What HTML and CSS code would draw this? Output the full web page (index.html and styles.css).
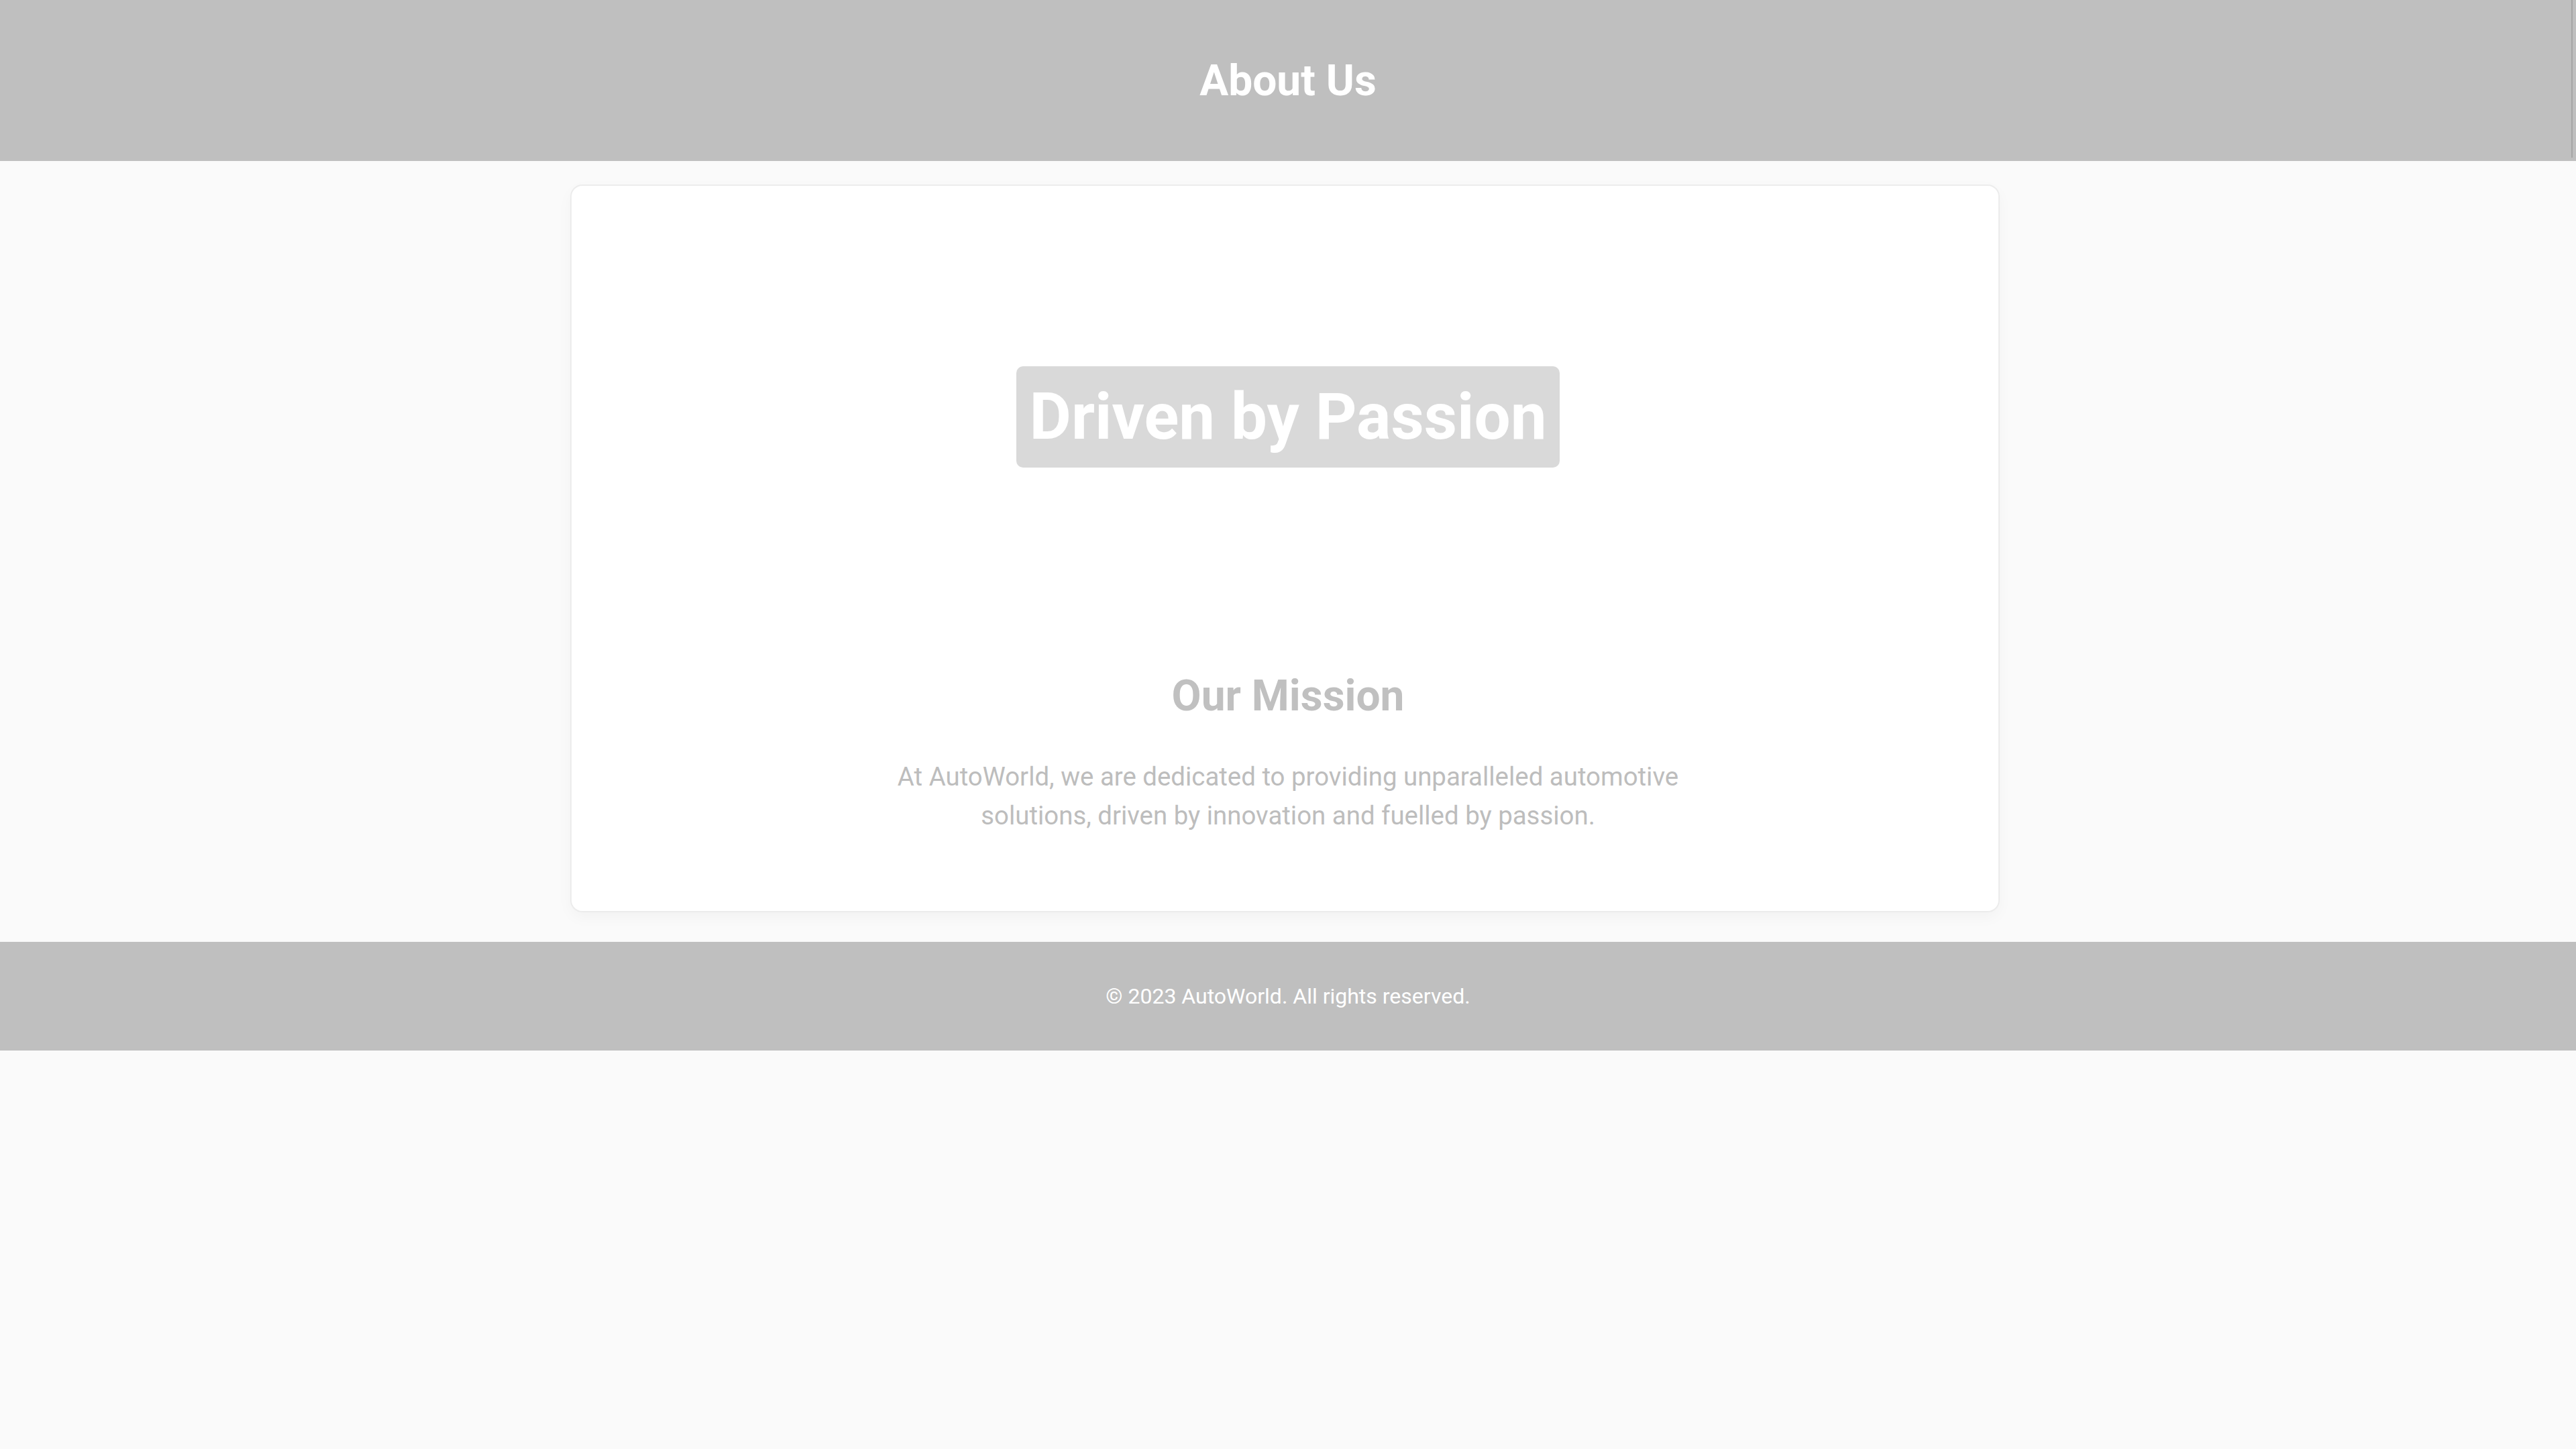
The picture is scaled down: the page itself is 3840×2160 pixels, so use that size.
FILE: index.html
```html
<!DOCTYPE html>
<html lang="en">
<head>
<meta charset="utf-8">
<title>About Us</title>
<link rel="stylesheet" href="styles.css">
</head>
<body>
<header class="site-header">
  <h1 class="site-title">About Us</h1>
</header>
<main class="main">
  <section class="card">
    <div class="hero">
      <h2 class="hero-title">Driven by Passion</h2>
    </div>
    <h2 class="section-title">Our Mission</h2>
    <p class="section-text">At AutoWorld, we are dedicated to providing unparalleled automotive solutions, driven by innovation and fuelled by passion.</p>
  </section>
</main>
<footer class="site-footer">
  <p class="footer-text">&copy; 2023 AutoWorld. All rights reserved.</p>
</footer>
</body>
</html>
```

FILE: styles.css
```css
* { box-sizing: border-box; }

html, body {
  margin: 0;
  padding: 0;
  background: #fafafa;
  font-family: Roboto, "Liberation Sans", Arial, sans-serif;
}

.site-header {
  position: relative;
  height: 240px;
  background: #bfbfbf;
  display: flex;
  align-items: center;
  justify-content: center;
}

.site-header::after {
  content: "";
  position: absolute;
  top: 0;
  right: 5px;
  width: 2px;
  height: 235px;
  background: #a6a6a6;
}

.site-title {
  margin: 0;
  color: #ffffff;
  font-size: 64px;
  font-weight: 700;
  line-height: normal;
}

.main {
  padding: 37px 9px 46px 0;
}

.card {
  width: 2127px;
  margin: 0 auto;
  background: #ffffff;
  border-radius: 16px;
  box-shadow: 0 0 0 2px #ececec, 0 8px 24px rgba(0, 0, 0, 0.04);
  padding: 44px 31px 114px 40px;
  text-align: center;
}

.hero {
  height: 600px;
  display: flex;
  align-items: center;
  justify-content: center;
}

.hero-title {
  margin: 0;
  background: #d9d9d9;
  color: #ffffff;
  font-size: 96px;
  font-weight: 700;
  line-height: 115px;
  padding: 18px 20px;
  border-radius: 10px;
}

.section-title {
  margin: 79px 0 0;
  color: #c0c0c0;
  font-size: 64px;
  font-weight: 700;
  line-height: normal;
}

.section-text {
  margin: 54px auto 0;
  max-width: 1200px;
  color: #bdbdbd;
  font-size: 38.4px;
  line-height: 57.6px;
}

.site-footer {
  height: 162px;
  background: #bfbfbf;
  display: flex;
  align-items: center;
  justify-content: center;
}

.footer-text {
  margin: 0;
  color: #ffffff;
  font-size: 32px;
  line-height: normal;
}
```
